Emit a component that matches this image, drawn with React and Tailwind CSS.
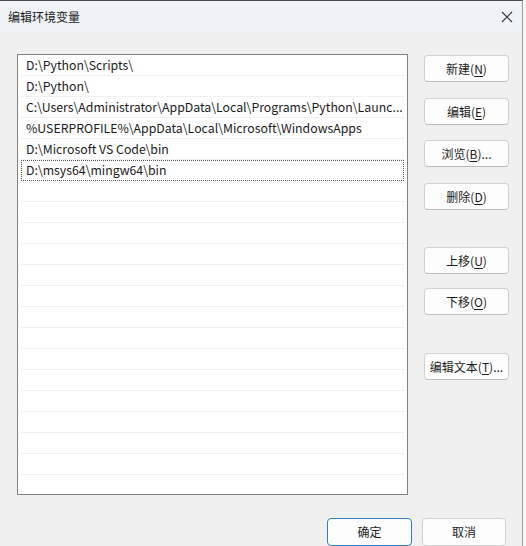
const paths = [
  'D:\\Python\\Scripts\\',
  'D:\\Python\\',
  'C:\\Users\\Administrator\\AppData\\Local\\Programs\\Python\\Launc...',
  '%USERPROFILE%\\AppData\\Local\\Microsoft\\WindowsApps',
  'D:\\Microsoft VS Code\\bin',
  'D:\\msys64\\mingw64\\bin',
]

const emptyRows = Array.from({ length: 15 })

const Btn = ({ label, keyChar, tail = '', className = '' }) => (
  <button className={`w-[85px] h-[27px] rounded-[4px] border border-[#d1d1d1] border-b-[#bcbcbc] bg-[#fdfdfd] text-[12px] text-[#1b1b1b] flex items-center justify-center ${className}`}>
    {label}(<span className="underline underline-offset-2">{keyChar}</span>){tail}
  </button>
)

export default function App() {
  return (
    <div
      className="w-[526px] h-[546px] bg-[#f7f7f7] overflow-hidden"
      style={{ fontFamily: '"Noto Sans CJK SC", "Noto Sans", sans-serif' }}
    >
      <div className="w-[523px] h-[546px] bg-[#f0f0f0] border-t border-[#4a4a4a] border-r border-r-[#9a9a9a] flex flex-col">
        {/* ── Title bar ── */}
        <div className="h-[31px] bg-[#eff2f6] flex items-center justify-between pl-[8px] pr-[8px]">
          <span className="text-[12px] text-[#1a1a1a]">编辑环境变量</span>
          <svg width="12" height="12" viewBox="0 0 12 12" className="mr-[1px]">
            <path d="M1 1 L11 11 M11 1 L1 11" stroke="#333" strokeWidth="1.1" />
          </svg>
        </div>

        {/* ── Body ── */}
        <div className="flex pl-[17px] pt-[22px]">
          <div className="w-[391px] h-[441px] bg-white border border-[#828282] overflow-hidden">
            {paths.map((p, i) => (
              <div
                key={i}
                className={`h-[21px] flex items-center mx-[3px] text-[12.3px] text-[#1a1a1a] ${
                  i === paths.length - 1
                    ? 'border border-dotted border-[#555] pl-[4px]'
                    : 'border-b border-[#f0f0f0] pl-[5px]'
                }`}
              >
                <span className="whitespace-nowrap">{p}</span>
              </div>
            ))}
            {emptyRows.map((_, i) => (
              <div key={i} className="h-[21px] mx-[3px] border-b border-[#f0f0f0]" />
            ))}
          </div>

          <div className="flex flex-col ml-[16px] mt-[1px]">
            <Btn label="新建" keyChar="N" />
            <Btn label="编辑" keyChar="E" className="mt-[16px]" />
            <Btn label="浏览" keyChar="B" tail="..." className="mt-[15px]" />
            <Btn label="删除" keyChar="D" className="mt-[16px]" />
            <Btn label="上移" keyChar="U" className="mt-[37px]" />
            <Btn label="下移" keyChar="O" className="mt-[14px]" />
            <Btn label="编辑文本" keyChar="T" tail="..." className="mt-[38px]" />
          </div>
        </div>

        {/* ── Footer ── */}
        <div className="flex justify-end gap-[10px] pr-[16px] mt-[23px]">
          <button className="w-[85px] h-[28px] rounded-[4px] border border-[#2f7fcf] bg-[#fdfdfd] text-[12px] text-[#1b1b1b]">
            确定
          </button>
          <button className="w-[84px] h-[28px] rounded-[4px] border border-[#d1d1d1] bg-[#fdfdfd] text-[12px] text-[#1b1b1b]">
            取消
          </button>
        </div>
      </div>
    </div>
  )
}
